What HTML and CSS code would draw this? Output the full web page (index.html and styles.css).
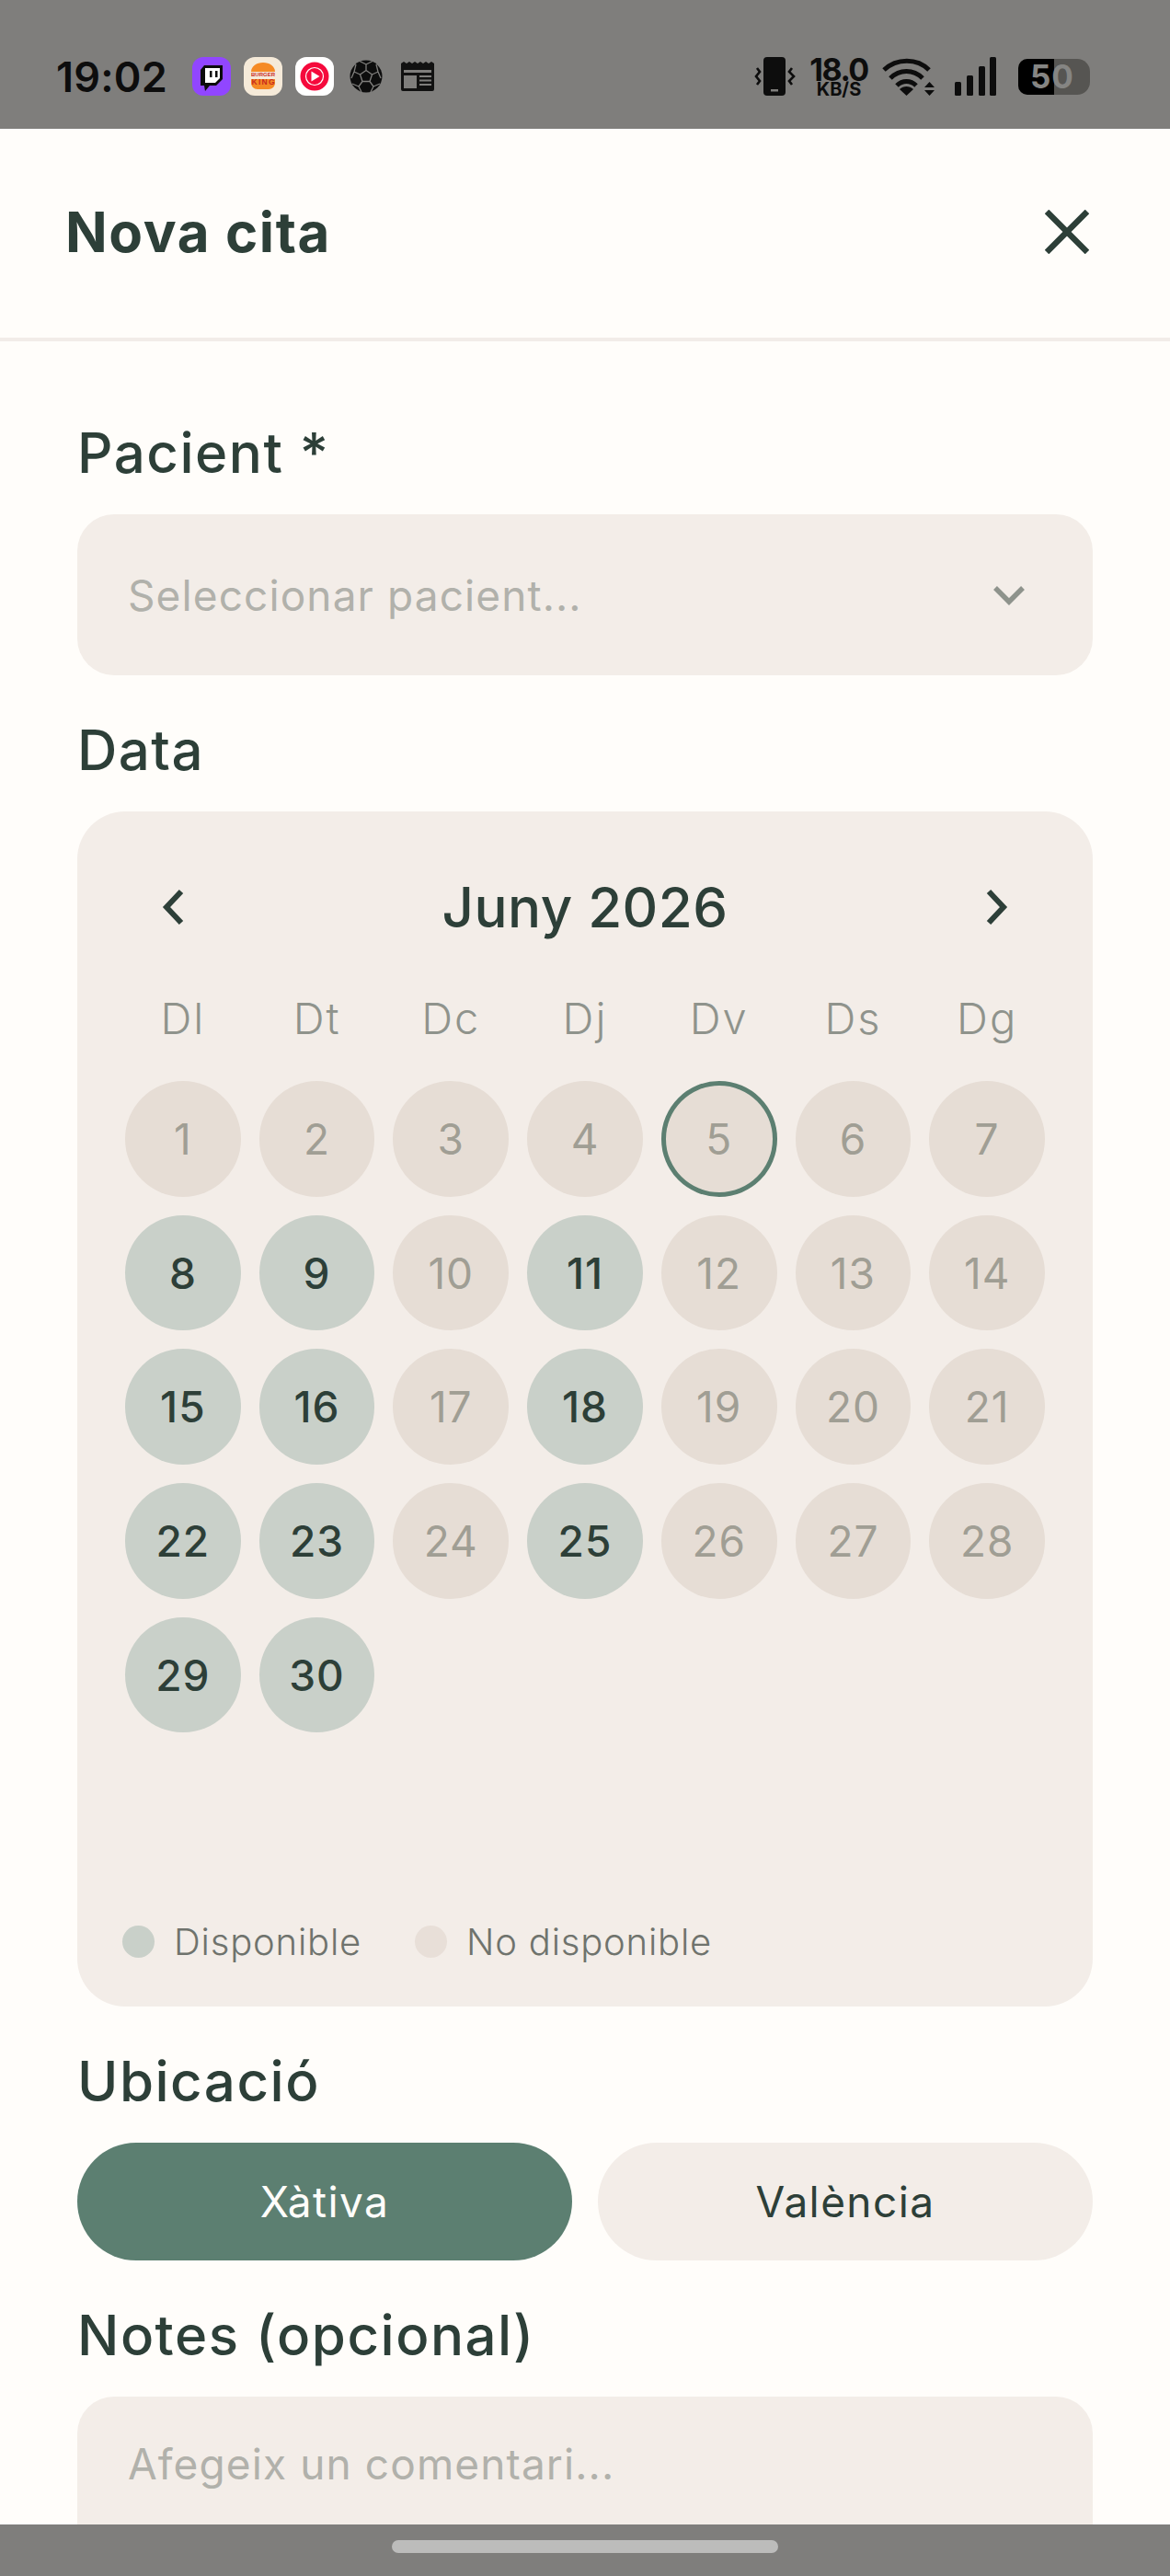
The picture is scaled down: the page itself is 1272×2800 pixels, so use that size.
FILE: index.html
```html
<!DOCTYPE html>
<html lang="ca">
<head>
<meta charset="UTF-8" />
<meta name="viewport" content="width=device-width, initial-scale=1" />
<title>Nova cita</title>
<link rel="stylesheet" href="styles.css">
</head>
<body>
  <div class="status-bar">
    <div class="status-left">
      <span class="status-time">19:02</span>
      <div class="app-icons">
        <svg class="app-icon" viewBox="0 0 42 42">
          <rect width="42" height="42" rx="12" fill="#9146ff"/>
          <path d="M13 9H33V24L26 31H19L14 37L13 31H9V14Z" fill="#0b0b0b"/>
          <path d="M14 12H30V23L25 28H14Z" fill="#fff"/>
          <path d="M19 15h2.5v7H19zM25 15h2.5v7H25z" fill="#0b0b0b"/>
        </svg>
        <svg class="app-icon" viewBox="0 0 42 42">
          <rect width="42" height="42" rx="12" fill="#f5ead9"/>
          <path d="M8 16C8 10 14 6 21 6S34 10 34 16Z" fill="#f58a25"/>
          <path d="M8 24H34V28C34 32 31 35 27 35H15C11 35 8 32 8 28Z" fill="#f58a25"/>
          <text class="bk-text" x="21" y="20.5" font-size="6" textLength="26">BURGER</text>
          <text class="bk-text" x="21" y="29.5" font-size="8.5" textLength="25">KING</text>
        </svg>
        <svg class="app-icon" viewBox="0 0 42 42">
          <rect width="42" height="42" rx="12" fill="#fff"/>
          <circle cx="21" cy="21" r="15.5" fill="#f5093c"/>
          <circle cx="21" cy="21" r="9.5" fill="none" stroke="#fff" stroke-width="1.2"/>
          <path d="M17.5 15.5L26.5 21L17.5 26.5Z" fill="#fff"/>
        </svg>
        <svg class="ball-icon" viewBox="0 0 36 36">
          <circle cx="18" cy="18" r="17.5" fill="#0d0d0d"/>
          <path d="M18 11.5L24.5 16L22 23.5H14L11.5 16ZM18 11.5V5M24.5 16L31 13M22 23.5L26 29M14 23.5L10 29M11.5 16L5 13M18 5L11 1.5M18 5L25 1.5M31 13L34 20M31 13L29 5M26 29L33 26M26 29L23 35M10 29L3 26M10 29L13 35M5 13L2 20M5 13L7 5" fill="none" stroke="#7f7e7c" stroke-width="1.3"/>
        </svg>
        <svg class="news-icon" viewBox="0 0 36 32">
          <path d="M0 2L3 0L6 2L9 0L12 2L15 0L18 2L21 0L24 2L27 0L30 2L33 0L36 2V30Q36 32 34 32H2Q0 32 0 30Z" fill="#111"/>
          <path d="M3 9H33V12H3ZM3 15H17V29H3ZM20 15H33V17H20ZM20 19.5H33V21.5H20ZM20 24H33V26H20Z" fill="#7f7e7c"/>
        </svg>
      </div>
    </div>
    <div class="status-right">
      <svg class="vibrate-icon" viewBox="0 0 46 42">
        <rect x="10" y="0" width="24" height="42" rx="4" fill="#0d0d0d"/>
        <rect x="18" y="35" width="8" height="2.5" fill="#7f7e7c"/>
        <path d="M3 12L6 16L2 21L6 26L3 30M41 12L38 16L43 21L38 26L41 30" fill="none" stroke="#0d0d0d" stroke-width="2.6"/>
      </svg>
      <div class="net-speed">
        <span class="net-value">18.0</span>
        <span class="net-unit">KB/S</span>
      </div>
      <svg class="wifi-icon" viewBox="0 0 58 42">
        <path d="M2 14C16 1 38 1 51 14M9 23C19 13 34 13 44 23M16 31C22 25 31 25 37 31" fill="none" stroke="#0d0d0d" stroke-width="5"/>
        <path d="M26.5 42L19 35C23 31 30 31 34 35Z" fill="#0d0d0d"/>
        <path d="M51.500 27L57 33H46ZM46 36H57L51.500 42Z" fill="#0d0d0d"/>
      </svg>
      <svg class="signal-icon" viewBox="0 0 45 42">
        <rect x="0" y="27" width="7" height="15" rx="1.500" fill="#0d0d0d"/>
        <rect x="13" y="20" width="7" height="22" rx="1.500" fill="#0d0d0d"/>
        <rect x="26" y="10" width="7" height="32" rx="1.500" fill="#0d0d0d"/>
        <rect x="38" y="0" width="7" height="42" rx="1.500" fill="#0d0d0d"/>
      </svg>
      <div class="battery">
        <div class="battery-fill"></div>
        <span class="battery-text">50</span>
      </div>
    </div>
  </div>

  <header class="sheet-header">
    <h1 class="sheet-title">Nova cita</h1>
    <svg class="close-icon" viewBox="0 0 48 48">
      <path d="M2 2L46 46M46 2L2 46" fill="none" stroke="#2d3f38" stroke-width="6.500"/>
    </svg>
  </header>

  <main class="sheet-body">
    <div class="field-label">Pacient *</div>
    <div class="select-box">
      <span class="placeholder">Seleccionar pacient...</span>
      <svg class="select-chevron" viewBox="0 0 36 22">
        <path d="M3 3L18 18L33 3" fill="none" stroke="#8e938c" stroke-width="5.500"/>
      </svg>
    </div>

    <div class="field-label">Data</div>
    <section class="calendar">
      <div class="cal-nav">
        <svg class="cal-arrow" viewBox="0 0 24 40">
          <path d="M21 3L5 20L21 37" fill="none" stroke="#2d3f38" stroke-width="6"/>
        </svg>
        <div class="cal-month">Juny 2026</div>
        <svg class="cal-arrow" viewBox="0 0 24 40">
          <path d="M3 3L19 20L3 37" fill="none" stroke="#2d3f38" stroke-width="6"/>
        </svg>
      </div>
      <div class="cal-weekdays">
        <span>Dl</span><span>Dt</span><span>Dc</span><span>Dj</span><span>Dv</span><span>Ds</span><span>Dg</span>
      </div>
      <div class="cal-days">
        <div class="day">1</div>
        <div class="day">2</div>
        <div class="day">3</div>
        <div class="day">4</div>
        <div class="day today">5</div>
        <div class="day">6</div>
        <div class="day">7</div>
        <div class="day free">8</div>
        <div class="day free">9</div>
        <div class="day">10</div>
        <div class="day free">11</div>
        <div class="day">12</div>
        <div class="day">13</div>
        <div class="day">14</div>
        <div class="day free">15</div>
        <div class="day free">16</div>
        <div class="day">17</div>
        <div class="day free">18</div>
        <div class="day">19</div>
        <div class="day">20</div>
        <div class="day">21</div>
        <div class="day free">22</div>
        <div class="day free">23</div>
        <div class="day">24</div>
        <div class="day free">25</div>
        <div class="day">26</div>
        <div class="day">27</div>
        <div class="day">28</div>
        <div class="day free">29</div>
        <div class="day free">30</div>
      </div>
      <div class="cal-legend">
        <div class="legend-item"><span class="legend-dot dot-free"></span>Disponible</div>
        <div class="legend-item"><span class="legend-dot dot-busy"></span>No disponible</div>
      </div>
    </section>

    <div class="field-label">Ubicació</div>
    <div class="place-buttons">
      <button class="place-btn active" type="button">Xàtiva</button>
      <button class="place-btn" type="button">València</button>
    </div>

    <div class="field-label">Notes (opcional)</div>
    <div class="notes-box">
      <span class="placeholder">Afegeix un comentari...</span>
    </div>
  </main>

  <div class="nav-bar"><div class="nav-pill"></div></div>
</body>
</html>
```

FILE: styles.css
```css
/* Base */
*, *::before, *::after {
  box-sizing: border-box;
}
html, body {
  margin: 0;
  padding: 0;
}
body {
  width: 1272px;
  height: 2800px;
  display: flex;
  flex-direction: column;
  overflow: hidden;
  background: #fffdfa;
  color: #2d3f38;
  font-family: 'Inter', 'Liberation Sans', sans-serif;
}

/* Status bar */
.status-bar {
  height: 140px;
  flex: none;
  display: flex;
  align-items: center;
  justify-content: space-between;
  background: #7f7e7c;
  color: #0d0d0d;
  padding: 26px 87px 0 61px;
}
.status-left, .status-right, .app-icons {
  display: flex;
  align-items: center;
}
.status-time {
  width: 148px;
  font-size: 45px;
  font-weight: 600;
  letter-spacing: 0.2px;
}
.app-icons {
  gap: 14px;
}
.app-icon {
  width: 42px;
  height: 42px;
}
.ball-icon {
  width: 36px;
  height: 36px;
  margin-left: 3px;
}
.news-icon {
  width: 36px;
  height: 32px;
  margin-left: 6px;
}
.bk-text {
  font-family: 'Liberation Sans', sans-serif;
  font-weight: 700;
  fill: #c8281e;
  text-anchor: middle;
}
.vibrate-icon {
  width: 46px;
  height: 42px;
}
.net-speed {
  width: 64px;
  margin-left: 14px;
  display: flex;
  flex-direction: column;
  align-items: center;
  font-weight: 700;
}
.net-value {
  font-size: 34px;
  line-height: 27px;
  letter-spacing: -1.5px;
}
.net-unit {
  font-size: 20px;
  line-height: 16px;
}
.wifi-icon {
  width: 58px;
  height: 42px;
  margin-left: 15px;
}
.signal-icon {
  width: 45px;
  height: 42px;
  margin-left: 21px;
}
.battery {
  position: relative;
  width: 78px;
  height: 39px;
  margin-left: 24px;
  border-radius: 10px 14px 14px 10px;
  background: #565552;
}
.battery-fill {
  width: 39px;
  height: 100%;
  border-radius: 10px 0 0 10px;
  background: #000;
}
/* over the fill, the digits straddle its edge */
.battery-text {
  position: absolute;
  left: 13px;
  top: 0;
  font-size: 35px;
  line-height: 39px;
  font-weight: 700;
  letter-spacing: 1px;
  color: #858583;
}

/* Header */
.sheet-header {
  height: 231px;
  flex: none;
  display: flex;
  align-items: center;
  justify-content: space-between;
  padding: 0 88px 4px 71px;
  border-bottom: 4px solid #f2ece8;
}
.sheet-title {
  margin: 0;
  font-size: 60px;
  font-weight: 700;
  letter-spacing: 1.6px;
}
.close-icon {
  width: 48px;
  height: 48px;
}

/* Form */
.sheet-body {
  flex: 1;
  min-height: 0;
  overflow: hidden;
  padding: 85px 84px 0;
}
.field-label {
  height: 72px;
  margin: 0 0 31px;
  font-size: 60px;
  line-height: 72px;
  font-weight: 500;
  letter-spacing: 1.5px;
}
.select-box {
  height: 175px;
  margin-bottom: 45px;
  display: flex;
  align-items: center;
  justify-content: space-between;
  padding: 0 73px 0 55px;
  background: #f3ede8;
  border-radius: 40px;
}
.placeholder {
  font-size: 46px;
  color: #b1b1ab;
  letter-spacing: 1.1px;
}
.select-chevron {
  width: 36px;
  height: 22px;
}

/* Calendar */
.calendar {
  height: 1299px;
  margin-bottom: 45px;
  padding: 64px 52px 0;
  background: #f3ede8;
  border-radius: 52px;
}
.cal-nav {
  height: 80px;
  margin-bottom: 51px;
  display: flex;
  align-items: center;
  justify-content: space-between;
  padding: 0 40px;
}
.cal-arrow {
  width: 24px;
  height: 40px;
}
.cal-month {
  font-size: 60px;
  font-weight: 500;
  letter-spacing: 0.5px;
}
.cal-weekdays, .cal-days {
  display: grid;
  grid-template-columns: repeat(7, 1fr);
  column-gap: 20px;
}
.cal-weekdays {
  height: 60px;
  margin-bottom: 38px;
  text-align: center;
  font-size: 47px;
  line-height: 60px;
  font-weight: 300;
  color: #8f938c;
  letter-spacing: 2px;
}
.cal-days {
  grid-template-rows: repeat(6, 125.7px);
  row-gap: 20px;
}
.day {
  display: flex;
  align-items: center;
  justify-content: center;
  border-radius: 50%;
  background: #e6ddd5;
  color: #a09e94;
  font-size: 46px;
  font-weight: 400;
  letter-spacing: 1px;
}
.day.free {
  background: #c9d0c9;
  color: #2d3f38;
  font-weight: 450;
}
.day.today {
  border: 5px solid #5c7f71;
}
.cal-legend {
  height: 50px;
  margin: 56px 0 0 -3px;
  display: flex;
  gap: 58px;
}
.legend-item {
  display: flex;
  align-items: center;
  gap: 21px;
  font-size: 40px;
  font-weight: 300;
  color: #6f736d;
  letter-spacing: 0.8px;
}
.legend-dot {
  width: 35px;
  height: 35px;
  border-radius: 50%;
}
.dot-free {
  background: #c9d0c9;
}
.dot-busy {
  background: #e8dfd8;
}

/* Location */
.place-buttons {
  display: flex;
  gap: 28px;
  margin-bottom: 45px;
}
.place-btn {
  flex: 1;
  height: 128px;
  padding: 0;
  border: none;
  border-radius: 64px;
  background: #f3ede8;
  color: #2d3f38;
  font-family: inherit;
  font-size: 46px;
  font-weight: 400;
  letter-spacing: 1.4px;
}
.place-btn.active {
  background: #5c7f71;
  color: #fffdfa;
}

/* Notes */
.notes-box {
  height: 240px;
  padding: 45px 55px;
  background: #f3ede8;
  border-radius: 40px;
}

/* Bottom navigation */
.nav-bar {
  height: 56px;
  flex: none;
  display: flex;
  justify-content: center;
  padding-top: 17px;
  background: #7f7e7c;
}
.nav-pill {
  width: 420px;
  height: 14px;
  border-radius: 7px;
  background: #bcbcbb;
}
```
